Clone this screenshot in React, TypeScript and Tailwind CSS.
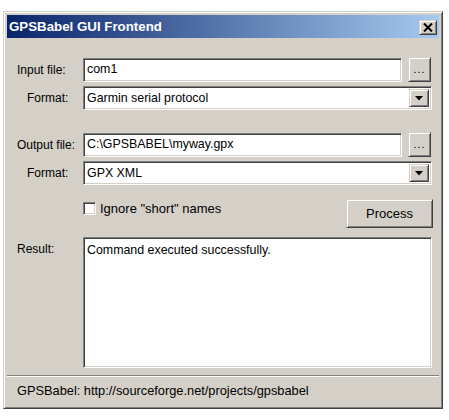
import React from "react";

const font = { fontFamily: '"Liberation Sans", Arial, sans-serif' };

function Sunken({ className = "", children }: { className?: string; children?: React.ReactNode }) {
  return (
    <div
      className={
        "bg-white border-t border-l border-b border-r border-t-[#808080] border-l-[#808080] border-b-white border-r-white shadow-[inset_1px_1px_0_#404040,inset_-1px_-1px_0_#d4d0c8] " +
        className
      }
    >
      {children}
    </div>
  );
}

function Raised({ className = "", children }: { className?: string; children?: React.ReactNode }) {
  return (
    <div
      className={
        "bg-[#d4d0c8] border border-t-[#d4d0c8] border-l-[#d4d0c8] border-b-[#404040] border-r-[#404040] shadow-[inset_1px_1px_0_#ffffff,inset_-1px_-1px_0_#808080] " +
        className
      }
    >
      {children}
    </div>
  );
}

function Combo({ text }: { text: string }) {
  return (
    <Sunken className="w-[349px] h-[24px] flex items-stretch p-[2px]">
      <div className="flex-1 flex items-center pl-[1px] text-[12.4px] text-black leading-none">{text}</div>
      <Raised className="w-[20px] flex items-center justify-center">
        <svg width="8" height="5" viewBox="0 0 8 5">
          <polygon points="0,0 8,0 4,4.5" fill="#000" />
        </svg>
      </Raised>
    </Sunken>
  );
}

function Browse() {
  return (
    <Raised className="w-[23px] h-[25px] flex items-end justify-center pb-[6px]">
      <span className="text-[11px] leading-none text-black tracking-[1px]">...</span>
    </Raised>
  );
}

export default function App() {
  return (
    <div className="w-[449px] h-[420px] bg-white pt-[11px] pl-[3px]" style={font}>
      <div className="w-[440px] h-[398px] bg-[#d4d0c8] border border-t-[#d4d0c8] border-l-[#d4d0c8] border-b-[#404040] border-r-[#404040] shadow-[inset_1px_1px_0_#ffffff,inset_-1px_-1px_0_#808080] p-[3px] flex flex-col">
        {/* title bar */}
        <div className="h-[23px] bg-[linear-gradient(to_right,#0a246a,#a6caf0)] flex items-center justify-between pl-[2px] pr-[2px]">
          <span className="text-white font-bold text-[13.3px] leading-none">GPSBabel GUI Frontend</span>
          <Raised className="w-[18px] h-[15px] flex items-center justify-center mt-[2px]">
            <svg width="10" height="9" viewBox="0 0 10 9">
              <path d="M1 0.5 L9 8.5 M9 0.5 L1 8.5" stroke="#000" strokeWidth="2" />
            </svg>
          </Raised>
        </div>

        {/* content */}
        <div className="flex flex-col pt-[19px] pl-[10px] pr-[7px] text-[12.4px] text-black">
          <div className="flex items-center h-[25px]">
            <div className="w-[66px] text-[12px]">Input file:</div>
            <Sunken className="w-[319px] h-[24px] flex items-center pl-[3px] leading-none">com1</Sunken>
            <div className="ml-[6px]">
              <Browse />
            </div>
          </div>
          <div className="flex items-center mt-[4px] h-[24px]">
            <div className="w-[66px] pl-[10px] text-[12px]">Format:</div>
            <Combo text="Garmin serial protocol" />
          </div>

          <div className="flex items-center h-[25px] mt-[22px]">
            <div className="w-[66px] text-[12px]">Output file:</div>
            <Sunken className="w-[319px] h-[24px] flex items-center pl-[3px] leading-none">C:\GPSBABEL\myway.gpx</Sunken>
            <div className="ml-[6px]">
              <Browse />
            </div>
          </div>
          <div className="flex items-center mt-[4px] h-[24px]">
            <div className="w-[66px] pl-[10px] text-[12px]">Format:</div>
            <Combo text="GPX XML" />
          </div>

          <div className="flex items-start mt-[14px] h-[29px]">
            <div className="w-[66px]" />
            <div className="flex items-center mt-[3px]">
              <Sunken className="w-[13px] h-[13px]" />
              <span className="ml-[4px] text-[13px] leading-none">Ignore "short" names</span>
            </div>
            <div className="flex-1" />
            <Raised className="w-[87px] h-[29px] flex items-center justify-center mr-[-1px]">
              <span className="text-[13px] leading-none">Process</span>
            </Raised>
          </div>

          <div className="flex items-start mt-[9px]">
            <div className="w-[66px] pt-[6px] leading-none text-[12px]">Result:</div>
            <Sunken className="w-[349px] h-[131px] pl-[3px] pt-[6px] leading-none">
              Command executed successfully.
            </Sunken>
          </div>
        </div>

        {/* separator */}
        <div className="mt-[7px] h-[2px] border-t border-t-[#808080] border-b border-b-white" />

        {/* status */}
        <div className="flex-1 flex items-center pl-[10px] text-[12.8px] text-black leading-none">
          GPSBabel: http://sourceforge.net/projects/gpsbabel
        </div>
      </div>
    </div>
  );
}
